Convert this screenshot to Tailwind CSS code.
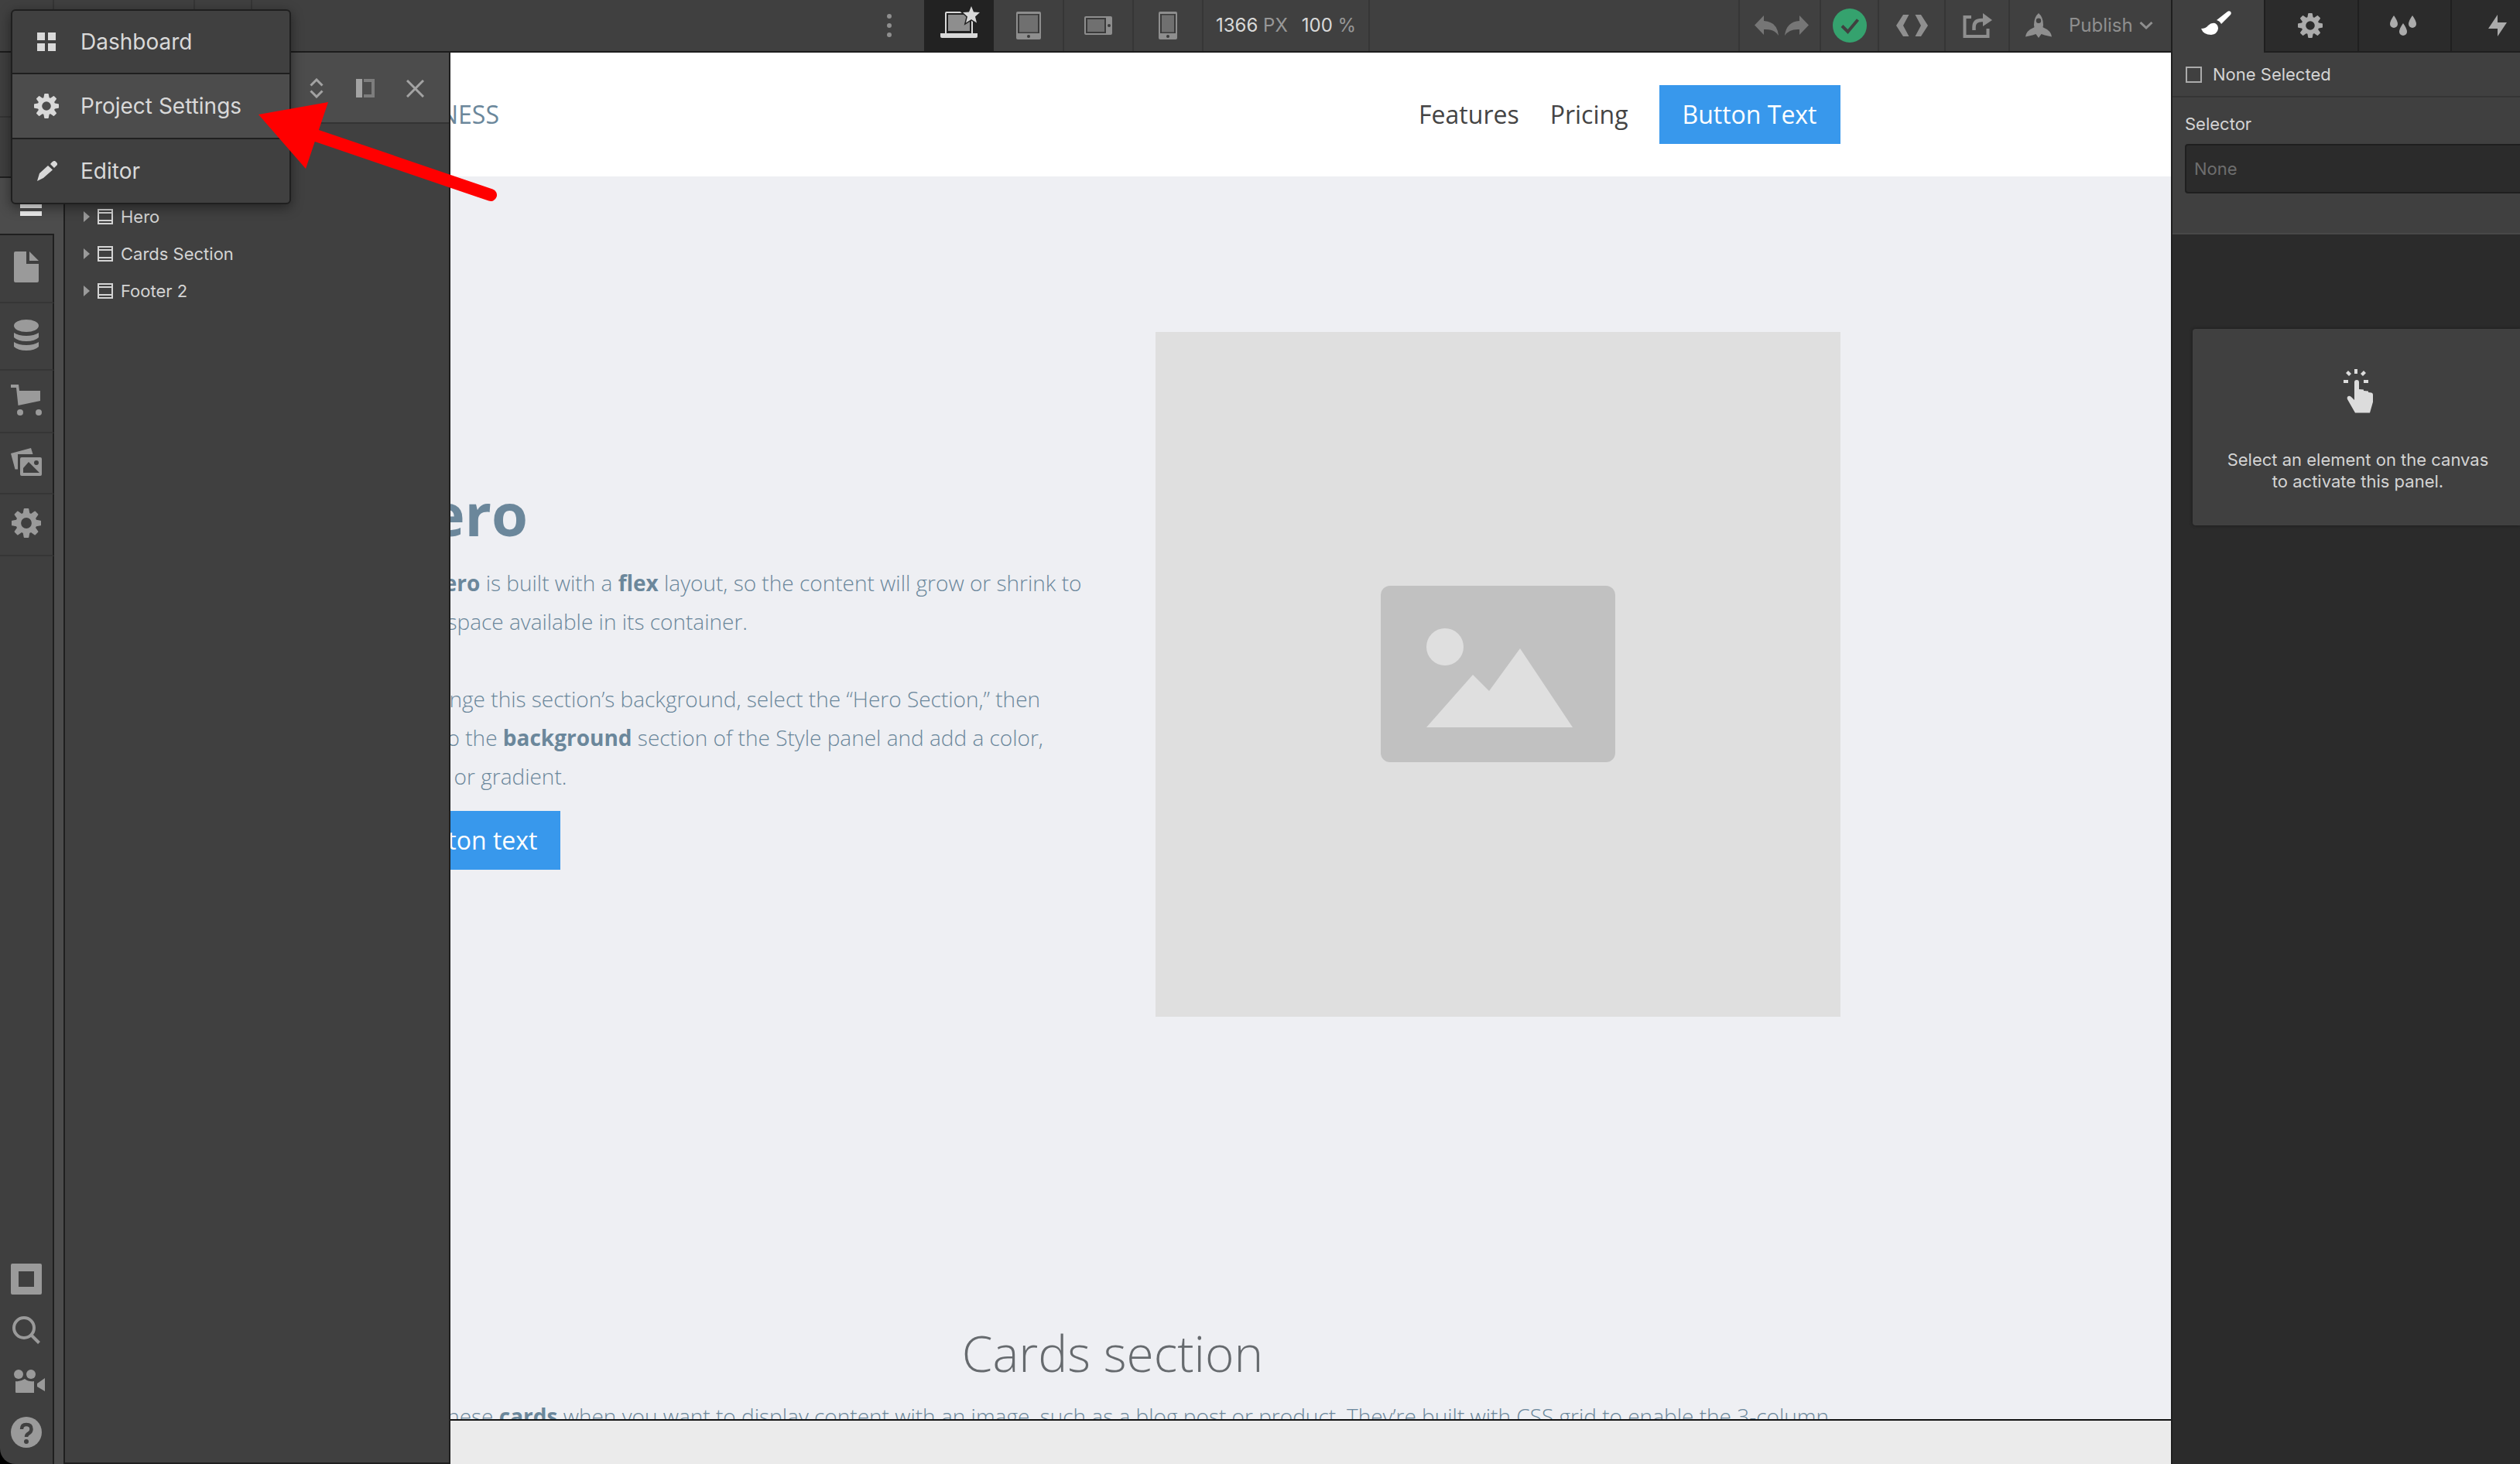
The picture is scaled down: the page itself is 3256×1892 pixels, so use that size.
<!DOCTYPE html>
<html lang="en">
<head>
<meta charset="utf-8">
<title>Designer</title>
<script src="https://cdn.jsdelivr.net/npm/@tailwindcss/browser@4"></script>
</head>
<body class="h-screen overflow-hidden bg-black font-['Inter',sans-serif]">
<svg class="hidden" aria-hidden="true">
  <symbol id="gear" viewBox="0 0 38 38">
    <circle cx="19" cy="19" r="10.2" fill="none" stroke="currentColor" stroke-width="6.6"/>
    <g fill="currentColor">
      <path id="tooth" d="M16.6 0h4.8q.8 0 .9.800l1.200 6.700h-9l1.200-6.700q.1-.8.9-.8z"/>
      <use href="#tooth" transform="rotate(45 19 19)"/><use href="#tooth" transform="rotate(90 19 19)"/><use href="#tooth" transform="rotate(135 19 19)"/><use href="#tooth" transform="rotate(180 19 19)"/><use href="#tooth" transform="rotate(225 19 19)"/><use href="#tooth" transform="rotate(270 19 19)"/><use href="#tooth" transform="rotate(315 19 19)"/>
    </g>
  </symbol>
  <symbol id="section" viewBox="0 0 20 20"><path d="M1 1h18v18H1zM1 5h18M1 15h18" fill="none" stroke="currentColor" stroke-width="2"/></symbol>
</svg>

<div class="relative flex h-full overflow-hidden rounded-bl-[20px]">
  <div class="flex min-w-0 flex-1 flex-col">

    <!-- Top bar -->
    <header class="flex h-[68px] shrink-0 items-stretch border-b-2 border-[#1c1c1c] bg-[#404040] text-2xl text-[#8f8f8f]">
      <div class="w-[70px] border-r-2 border-[#363636]"></div>
      <div class="w-[182px] border-r-2 border-[#363636]"></div>
      <div class="w-[74px] border-r-2 border-[#363636]"></div>
      <div class="flex-1"></div>
      <button class="flex w-[90px] items-center justify-center" aria-label="More breakpoints">
        <svg class="h-[32px] w-[8px]" viewBox="0 0 8 32" fill="currentColor"><circle cx="4" cy="4" r="3"/><circle cx="4" cy="16" r="3"/><circle cx="4" cy="28" r="3"/></svg>
      </button>
      <button class="flex w-[90px] items-center justify-center bg-[#222] pl-1" aria-label="Desktop">
        <svg class="mb-2 h-[44px] w-[52px]" viewBox="0 0 52 44"><path d="M6 10q0-2 2-2h32q2 0 2 2v26H6z" fill="#d9d9d9"/><path d="M8 10h32v26H8z" fill="#222"/><path d="M10 12h28v21H10z" fill="#8e8e8e"/><path d="M0 36h48v4q0 2-2 2H2q-2 0-2-2z" fill="#d9d9d9"/><path d="M40 1l3 7.500 8 .6-6 5.300 2 8-7-4.400-7 4.400 2-8-6-5.300 8-.6z" fill="#d9d9d9" stroke="#222" stroke-width="3" paint-order="stroke"/></svg>
      </button>
      <button class="flex w-[91px] items-center justify-center border-r-2 border-[#363636]" aria-label="Tablet">
        <svg class="h-[36px] w-[32px]" viewBox="0 0 32 36"><rect width="32" height="36" rx="2" fill="#8e8e8e"/><path d="M2 3h28v25H2z" fill="#3a3a3a"/><path d="M4 4.500h24v22H4z" fill="#707070"/><circle cx="16" cy="32" r="2" fill="#3a3a3a"/></svg>
      </button>
      <button class="flex w-[90px] items-center justify-center border-r-2 border-[#363636]" aria-label="Mobile landscape">
        <svg class="h-[24px] w-[36px]" viewBox="0 0 36 24"><rect width="36" height="24" rx="2" fill="#8e8e8e"/><path d="M2 2h26v20H2z" fill="#3a3a3a"/><path d="M4 4h22v16H4z" fill="#707070"/><circle cx="32" cy="12" r="2" fill="#3a3a3a"/></svg>
      </button>
      <button class="flex w-[90px] items-center justify-center border-r-2 border-[#363636]" aria-label="Mobile portrait">
        <svg class="h-[36px] w-[24px]" viewBox="0 0 24 36"><rect width="24" height="36" rx="2" fill="#8e8e8e"/><path d="M2 3h20v25H2z" fill="#3a3a3a"/><path d="M4 4.500h16v22H4z" fill="#707070"/><circle cx="12" cy="32" r="2" fill="#3a3a3a"/></svg>
      </button>
      <div class="flex w-[215px] items-center gap-[18px] border-r-2 border-[#363636] pl-4 whitespace-nowrap text-[#989898]">
        <span><span class="text-[#d9d9d9]">1366</span> PX</span>
        <span><span class="text-[#d9d9d9]">100</span> %</span>
      </div>
      <div class="w-[478px] border-r-2 border-[#363636]"></div>
      <div class="flex w-[105px] items-center justify-center gap-2 border-r-2 border-[#363636] pl-1 text-[#767676]">
        <button aria-label="Undo"><svg class="h-[26px] w-[31px]" viewBox="0 0 31 26" fill="currentColor"><path d="M0 12.500L12 0v7q17 1 19 19-6-9-19-8v7z"/></svg></button>
        <button aria-label="Redo"><svg class="h-[26px] w-[31px]" viewBox="0 0 31 26" fill="currentColor"><path d="M31 12.500L19 0v7Q2 8 0 26q6-9 19-8v7z"/></svg></button>
      </div>
      <button class="flex w-[75px] items-center justify-center border-r-2 border-[#363636]" aria-label="Saved">
        <svg class="h-[44px] w-[44px]" viewBox="0 0 44 44"><circle cx="22" cy="22" r="22" fill="#35a26e"/><path d="M12 22.500l7.500 7.500 13-15.500" fill="none" stroke="#404040" stroke-width="4"/></svg>
      </button>
      <button class="flex w-[86px] items-center justify-center border-r-2 border-[#363636]" aria-label="Export code">
        <svg class="h-[28px] w-[41px]" viewBox="0 0 41 28" fill="currentColor"><path d="M9 0h7.500L9 14l7.500 14H9L0 14zM32 0h-7.500L32 14l-7.500 14H32l9-14z"/></svg>
      </button>
      <button class="flex w-[83px] items-center justify-center border-r-2 border-[#363636]" aria-label="Share">
        <svg class="h-[32px] w-[38px]" viewBox="0 0 38 32"><path d="M11 5H2.500v25h30V20" fill="none" stroke="currentColor" stroke-width="4"/><path d="M14.500 22v-4q0-9 10-9h3" fill="none" stroke="currentColor" stroke-width="4.500"/><path d="M26 0l12 9-12 8z" fill="currentColor"/></svg>
      </button>
      <button class="flex w-[208px] items-center pl-5 text-[#8f8f8f]">
        <svg class="mr-[22px] h-[32px] w-[34px]" viewBox="0 0 34 32"><path fill="currentColor" fill-rule="evenodd" d="M17 0q6 5 6 15 0 1.500-.5 3l.5.500q10 4 11 12l-9-2-4.500-1.500L17 32l-3.500-5L9 28.500l-9 2q1-8 11-12l.5-.5q-.5-1.500-.5-3Q11 5 17 0zM17 6.500a3.200 3.200 0 1 0 0 6.400 3.200 3.200 0 1 0 0-6.400z"/></svg>
        Publish
        <svg class="ml-2 h-[10px] w-[18px]" viewBox="0 0 18 10"><path d="M1.500 1l7.500 7 7.500-7" fill="none" stroke="currentColor" stroke-width="3"/></svg>
      </button>
    </header>

    <div class="relative flex min-h-0 flex-1">
      <!-- Tool rail -->
      <nav class="z-20 flex w-[70px] shrink-0 flex-col bg-[#3f3f3f] text-[#9a9a9a]" aria-label="Tools">
        <div class="h-[84px] border-r-2 border-b-2 border-[#343434]"></div>
        <div class="h-[78px] border-r-2 border-b-2 border-[#1f1f1f]"></div>
        <button class="flex h-[72px] items-center bg-[#4c4c4c] pl-[26px] text-[#f0f0f0]" aria-label="Navigator">
          <svg class="h-[26px] w-[28px]" viewBox="0 0 28 26" fill="currentColor"><path d="M0 0h28v6H0zM0 10h28v6H0zM0 20h28v6H0z"/></svg>
        </button>
        <button class="flex h-[90px] items-center justify-center border-t-2 border-r-2 border-b-2 border-t-[#1f1f1f] border-r-[#1f1f1f] border-b-[#363636] pb-1" aria-label="Pages">
          <svg class="h-[40px] w-[32px]" viewBox="0 0 32 40" fill="currentColor"><path d="M0 2q0-2 2-2h14v16h16v22q0 2-2 2H2q-2 0-2-2zM20 0l12 12H20z"/></svg>
        </button>
        <button class="flex h-[87px] items-center justify-center border-r-2 border-b-2 border-r-[#1f1f1f] border-b-[#363636] pb-1" aria-label="CMS">
          <svg class="h-[40px] w-[32px]" viewBox="0 0 32 40" fill="currentColor"><path d="M0 8a16 8 0 0 1 32 0 16 8 0 0 1-32 0zM0 17q6 4 16 4t16-4v6q-5 5-16 5T0 23zM0 29q6 4 16 4t16-4v6q-5 5-16 5T0 35z"/></svg>
        </button>
        <button class="flex h-[81px] items-center justify-center border-r-2 border-b-2 border-r-[#1f1f1f] border-b-[#363636] pb-1" aria-label="Ecommerce">
          <svg class="h-[40px] w-[40px]" viewBox="0 0 40 40" fill="currentColor"><path d="M0 0h10l1 8h27v13L9.500 27 7 4H0z"/><circle cx="12" cy="36" r="4"/><circle cx="36" cy="36" r="4"/></svg>
        </button>
        <button class="flex h-[79px] items-center justify-center border-r-2 border-b-2 border-r-[#1f1f1f] border-b-[#363636] pb-1" aria-label="Assets">
          <svg class="h-[36px] w-[40px]" viewBox="0 0 40 36" fill="currentColor"><path d="M0 7L26 0l2.500 8H9v19.500H5.500z"/><path fill-rule="evenodd" d="M12 14q0-2 2-2h24q2 0 2 2v20q0 2-2 2H14q-2 0-2-2zM16 32h21L23 18l-7 8zM33 16a3 3 0 1 0 0 6 3 3 0 1 0 0-6z"/></svg>
        </button>
        <button class="flex h-[80px] items-center justify-center border-r-2 border-b-2 border-r-[#1f1f1f] border-b-[#363636] pb-1" aria-label="Settings">
          <svg class="h-[38px] w-[38px]"><use href="#gear"/></svg>
        </button>
        <div class="flex flex-1 flex-col justify-end border-r-2 border-[#1f1f1f] pb-2">
          <button class="flex h-[66px] items-center justify-center" aria-label="Toggle outlines"><svg class="h-[40px] w-[40px]" viewBox="0 0 40 40" fill="currentColor"><path fill-rule="evenodd" d="M2 0h36q2 0 2 2v36q0 2-2 2H2q-2 0-2-2V2q0-2 2-2zM10 10v20h20V10z"/></svg></button>
          <button class="flex h-[66px] items-center justify-center" aria-label="Search"><svg class="h-[36px] w-[36px]" viewBox="0 0 36 36" fill="none" stroke="currentColor" stroke-width="4"><circle cx="15" cy="15" r="13"/><path d="M24 24l10.500 10.500"/></svg></button>
          <button class="flex h-[66px] items-center justify-center pl-2" aria-label="Video tutorials"><svg class="h-[30px] w-[40px]" viewBox="0 0 40 30" fill="currentColor"><circle cx="6" cy="6" r="6"/><circle cx="22" cy="6" r="6"/><path d="M2 15q6 1 12-3 5 4 12 3v15H3q-1 0-1-1zM30 18l10-7v17l-10-6z"/></svg></button>
          <button class="flex h-[66px] items-center justify-center" aria-label="Help"><svg class="h-[40px] w-[40px]" viewBox="0 0 40 40"><circle cx="20" cy="20" r="20" fill="currentColor"/><path d="M14 16q0-6 6-6 6.500 0 6.500 6 0 3.500-3.500 5.500-3 1.700-3 4.500" fill="none" stroke="#404040" stroke-width="4.500"/><circle cx="20" cy="32" r="3" fill="#404040"/></svg></button>
        </div>
      </nav>

      <!-- Navigator panel, floating over the canvas -->
      <aside class="absolute top-0 bottom-0 left-[70px] z-10 flex w-[512px] border-r-2 border-[#1f1f1f] bg-[#404040]">
        <div class="w-[14px] shrink-0 border-r-2 border-[#1f1f1f] bg-[#4c4c4c]"></div>
        <div class="flex flex-1 flex-col border-b-2 border-[#1f1f1f]">
          <div class="flex h-[92px] items-center justify-end border-b-2 border-[#333] bg-[#4c4c4c] pt-0.5 pr-8 text-[#a3a3a3]">
            <button class="mr-[42px]" aria-label="Collapse all"><svg class="h-[26px] w-[18px]" viewBox="0 0 18 26" fill="none" stroke="currentColor" stroke-width="3"><path d="M1.500 9.500L9 2l7.500 7.500M1.500 16.500L9 24l7.500-7.500"/></svg></button>
            <button class="mr-[41px]" aria-label="Pin panel"><svg class="h-[24px] w-[24px]" viewBox="0 0 24 24"><path d="M0 0h8v24H0z" fill="currentColor"/><path d="M10 2h12v20H10" fill="none" stroke="#7d7d7d" stroke-width="4"/></svg></button>
            <button aria-label="Close"><svg class="h-[23px] w-[23px]" viewBox="0 0 23 23"><path d="M1 1l21 21M22 1L1 22" stroke="currentColor" stroke-width="3"/></svg></button>
          </div>
          <ul class="pt-24 pl-6 text-[22px] text-[#d4d4d4]">
            <li class="flex h-[48px] items-center"><svg class="mr-[10px] h-[14px] w-[8px]" viewBox="0 0 8 14"><path d="M0 0l8 7-8 7z" fill="#9a9a9a"/></svg><svg class="mr-[10px] h-[20px] w-[20px]"><use href="#section"/></svg>Hero</li>
            <li class="flex h-[48px] items-center"><svg class="mr-[10px] h-[14px] w-[8px]" viewBox="0 0 8 14"><path d="M0 0l8 7-8 7z" fill="#9a9a9a"/></svg><svg class="mr-[10px] h-[20px] w-[20px]"><use href="#section"/></svg>Cards Section</li>
            <li class="flex h-[48px] items-center"><svg class="mr-[10px] h-[14px] w-[8px]" viewBox="0 0 8 14"><path d="M0 0l8 7-8 7z" fill="#9a9a9a"/></svg><svg class="mr-[10px] h-[20px] w-[20px]"><use href="#section"/></svg>Footer 2</li>
          </ul>
        </div>
      </aside>

      <!-- Canvas -->
      <main class="flex min-w-0 flex-1 flex-col bg-[#ebebeb] font-['Open_Sans',sans-serif]">
        <div class="min-h-0 flex-1 overflow-hidden border-b-2 border-[#111] bg-[#eeeff3]">
          <div class="bg-white">
            <div class="mx-auto flex h-[160px] max-w-[1880px] items-center justify-between text-[32px]">
              <a href="#" class="text-[#6b879b]">BUSINESS</a>
              <nav class="flex items-center gap-10 text-[#444]">
                <a href="#">Features</a>
                <a href="#">Pricing</a>
                <a href="#" class="flex h-[76px] w-[234px] items-center justify-center bg-[#3898ec] text-white">Button Text</a>
              </nav>
            </div>
          </div>
          <section class="pt-[201px] pb-[199px]">
            <div class="mx-auto flex max-w-[1880px] items-center justify-between">
              <div class="whitespace-nowrap text-[#6b879b]">
                <h1 class="mb-5 text-[76px] leading-[88px] font-bold">Hero</h1>
                <p class="text-[28px] leading-[50px] font-light">This <b class="font-bold">hero</b> is built with a <b class="font-bold">flex</b> layout, so the content will grow or shrink to<br>fit the space available in its container.<br><br>To change this section’s background, select the “Hero Section,” then<br>head to the <b class="font-bold">background</b> section of the Style panel and add a color,<br>image, or gradient.</p>
                <a href="#" class="mt-5 flex h-[76px] w-[226px] items-center justify-center bg-[#3898ec] text-[32px] text-white">Button text</a>
              </div>
              <svg class="h-[885px] w-[885px]" viewBox="0 0 885 885" role="img" aria-label="Placeholder image">
                <path d="M0 0h885v885H0z" fill="#dfdfdf"/><rect x="291" y="328" width="303" height="228" rx="12" fill="#c1c1c1"/><circle cx="374" cy="407" r="24" fill="#dfdfdf"/><path d="M350 511l60-68 21 21 40-55 68 102z" fill="#dfdfdf"/>
              </svg>
            </div>
          </section>
          <section class="pt-[196px] text-center">
            <h2 class="mb-4 text-[64px] leading-[80px] font-light text-[#666a6e]">Cards section</h2>
            <p class="mx-auto max-w-[1880px] text-[28px] leading-[50px] font-light whitespace-nowrap text-[#6b879b]">Use these <b class="font-bold">cards</b> when you want to display content with an image, such as a blog post or product. They’re built with CSS grid to enable the 3-column</p>
          </section>
        </div>
        <div class="h-[56px] shrink-0"></div>
      </main>
    </div>
  </div>

  <!-- Style panel -->
  <aside class="flex w-[451px] shrink-0 flex-col overflow-hidden border-l-2 border-[#1f1f1f] bg-[#2b2b2b] text-[22px] text-[#d4d4d4]">
    <div class="flex h-[68px] shrink-0 text-[#ababab]">
      <button class="flex w-[118px] shrink-0 items-center justify-center bg-[#404040] pr-1 pb-2 text-white" aria-label="Style">
        <svg class="h-[32px] w-[40px]" viewBox="0 0 40 32" fill="currentColor"><path d="M0 23q6 0 9-4 4-4 9-3 4 2 4 7-1 7-9 8Q3 31 0 23zM20 12L34 1q2-1.500 4 0 1.500 2 0 4L26 17q-2-4-6-5z"/></svg>
      </button>
      <button class="flex w-[121px] shrink-0 items-center justify-center border-b-2 border-l-2 border-[#1f1f1f] pr-1" aria-label="Element settings"><svg class="h-[32px] w-[32px]"><use href="#gear"/></svg></button>
      <button class="flex w-[120px] shrink-0 items-center justify-center border-b-2 border-l-2 border-[#1f1f1f] pr-1" aria-label="Style manager">
        <svg class="h-[26px] w-[34px]" viewBox="0 0 34 26" fill="currentColor"><path d="M5 0q5 7 5 11a5 5 0 0 1-10 0Q0 7 5 0zM29 0q5 7 5 11a5 5 0 0 1-10 0q0-4 5-11zM17 10q5 7 5 11a5 5 0 0 1-10 0q0-4 5-11z"/></svg>
      </button>
      <button class="flex w-[120px] shrink-0 items-center justify-center border-b-2 border-l-2 border-[#1f1f1f]" aria-label="Interactions">
        <svg class="h-[28px] w-[24px]" viewBox="0 0 24 28" fill="currentColor"><path d="M12 0v10h12L12 28V18H0z"/></svg>
      </button>
    </div>
    <div class="flex h-[58px] shrink-0 items-center gap-[14px] border-b-2 border-[#353535] bg-[#404040] pl-[17px]">
      <input type="checkbox" id="none" class="h-[21px] w-[21px] appearance-none border-2 border-[#ababab]"><label for="none">None Selected</label>
    </div>
    <div class="h-[177px] shrink-0 border-b-2 border-[#484848] bg-[#404040] pt-[20px] pl-4">
      <label for="selector" class="block leading-[28px]">Selector</label>
      <input id="selector" placeholder="None" class="mt-3 h-[64px] w-full rounded-l border-2 border-r-0 border-[#1f1f1f] bg-[#2b2b2b] pl-[10px] placeholder:text-[#6e6e6e]">
    </div>
    <div class="mt-[122px] ml-[26px] flex h-[254px] flex-col items-center rounded-l-[4px] bg-[#404040] pt-[51px] pl-1 shadow-[0_0_4px_#1a1a1a]">
      <svg class="h-[58px] w-[38px]" viewBox="0 0 38 58" fill="#dcdcdc"><path d="M14 1h4v6h-4zM0 15h6v4H0zM26 15h6v4h-6zM3 6l3-3 4 4-3 3zM29 6l-3-3-4 4 3 3zM14 18q0-3 3-3t3 3v9l6 .5v1.500l6 .5v1.500l4 .5q2 0 2 3v9l-4 14H15L5 40q-1-3 1-4t4 1l4 4z"/></svg>
      <p class="mt-[46px] text-center leading-[28px] whitespace-nowrap">Select an element on the canvas<br>to activate this panel.</p>
    </div>
  </aside>

  <!-- Main menu -->
  <div role="menu" class="absolute top-[12px] left-[14px] z-30 w-[362px] divide-y-2 divide-[#1f1f1f] rounded-md border-2 border-[#1f1f1f] bg-[#404040] text-[28px] text-[#d9d9d9] shadow-[0_4px_16px_rgba(0,0,0,0.45)]">
    <button role="menuitem" class="flex h-[82px] w-full items-center pl-[32px]"><svg class="mr-[32px] h-[24px] w-[24px]" viewBox="0 0 24 24" fill="currentColor"><path d="M0 0h10v10H0zM14 0h10v10H14zM0 14h10v10H0zM14 14h10v10H14z"/></svg>Dashboard</button>
    <button role="menuitem" class="flex h-[84px] w-full items-center bg-[#4c4c4c] pl-[28px]"><svg class="mr-[28px] h-[32px] w-[32px]"><use href="#gear"/></svg>Project Settings</button>
    <button role="menuitem" class="flex h-[82px] w-full items-center pl-[32px]"><svg class="mr-[30px] h-[26px] w-[26px]" viewBox="0 0 26 26" fill="currentColor"><path d="M0 26l3-10L14 6l6 5.500L8 22zM17 4q4-5 6-4 4 3 3 5l-4 4z"/></svg>Editor</button>
  </div>

  <!-- Pointer annotation -->
  <svg class="pointer-events-none absolute top-[120px] left-[330px] z-40 h-[150px] w-[320px]" viewBox="330 120 320 150"><path d="M334 148l90-16-29 86z" fill="#f00"/><path d="M405 174l229 78" stroke="#f00" stroke-width="16" stroke-linecap="round"/></svg>
</div>
</body>
</html>
